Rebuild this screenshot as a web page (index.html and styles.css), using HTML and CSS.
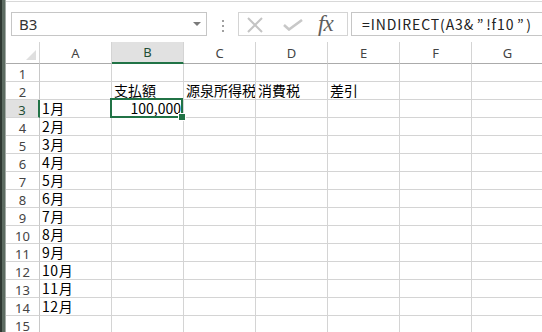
FILE: index.html
```html
<!DOCTYPE html>
<html lang="ja">
<head>
<meta charset="utf-8">
<link rel="stylesheet" href="styles.css">
</head>
<body>
<div class="app">
  <div class="edge"></div>
  <div class="main">
    <div class="topbar">
      <div class="namebox"><span class="name">B3</span><span class="arrow"></span></div>
      <div class="grip"><i></i><i></i><i></i></div>
      <div class="fnbtns">
        <svg class="ic-x" width="16" height="16" viewBox="0 0 16 16"><path d="M1 1L15 15M15 1L1 15" stroke="#c4c4c4" stroke-width="2" fill="none"/></svg>
        <svg class="ic-check" width="20" height="12" viewBox="0 0 20 12"><path d="M1 6L6 10.5L19 1" stroke="#c8c8c8" stroke-width="2.6" fill="none"/></svg>
        <span class="fx">fx</span>
      </div>
      <div class="formula">=INDIRECT(A3&amp;<span class="q">”</span>!f10<span class="q">”</span>)</div>
    </div>
    <div class="sheet">
      <div class="hd corner"><span class="tri"></span></div>
      <div class="hd col">A</div>
      <div class="hd col sel">B</div>
      <div class="hd col">C</div>
      <div class="hd col">D</div>
      <div class="hd col">E</div>
      <div class="hd col">F</div>
      <div class="hd col">G</div>

      <div class="hd row">1</div><div class="c"></div><div class="c"></div><div class="c"></div><div class="c"></div><div class="c"></div><div class="c"></div><div class="c"></div>
      <div class="hd row">2</div><div class="c"></div><div class="c">支払額</div><div class="c clip">源泉所得税</div><div class="c">消費税</div><div class="c">差引</div><div class="c"></div><div class="c"></div>
      <div class="hd row sel">3</div><div class="c m">1月</div><div class="c num active">100,000</div><div class="c"></div><div class="c"></div><div class="c"></div><div class="c"></div><div class="c"></div>
      <div class="hd row">4</div><div class="c m">2月</div><div class="c"></div><div class="c"></div><div class="c"></div><div class="c"></div><div class="c"></div><div class="c"></div>
      <div class="hd row">5</div><div class="c m">3月</div><div class="c"></div><div class="c"></div><div class="c"></div><div class="c"></div><div class="c"></div><div class="c"></div>
      <div class="hd row">6</div><div class="c m">4月</div><div class="c"></div><div class="c"></div><div class="c"></div><div class="c"></div><div class="c"></div><div class="c"></div>
      <div class="hd row">7</div><div class="c m">5月</div><div class="c"></div><div class="c"></div><div class="c"></div><div class="c"></div><div class="c"></div><div class="c"></div>
      <div class="hd row">8</div><div class="c m">6月</div><div class="c"></div><div class="c"></div><div class="c"></div><div class="c"></div><div class="c"></div><div class="c"></div>
      <div class="hd row">9</div><div class="c m">7月</div><div class="c"></div><div class="c"></div><div class="c"></div><div class="c"></div><div class="c"></div><div class="c"></div>
      <div class="hd row">10</div><div class="c m">8月</div><div class="c"></div><div class="c"></div><div class="c"></div><div class="c"></div><div class="c"></div><div class="c"></div>
      <div class="hd row">11</div><div class="c m">9月</div><div class="c"></div><div class="c"></div><div class="c"></div><div class="c"></div><div class="c"></div><div class="c"></div>
      <div class="hd row">12</div><div class="c m">10月</div><div class="c"></div><div class="c"></div><div class="c"></div><div class="c"></div><div class="c"></div><div class="c"></div>
      <div class="hd row">13</div><div class="c m">11月</div><div class="c"></div><div class="c"></div><div class="c"></div><div class="c"></div><div class="c"></div><div class="c"></div>
      <div class="hd row">14</div><div class="c m">12月</div><div class="c"></div><div class="c"></div><div class="c"></div><div class="c"></div><div class="c"></div><div class="c"></div>
      <div class="hd row">15</div><div class="c"></div><div class="c"></div><div class="c"></div><div class="c"></div><div class="c"></div><div class="c"></div><div class="c"></div>
    </div>
  </div>
</div>
</body>
</html>
```

FILE: styles.css
```css
* { box-sizing: border-box; }
html, body { margin: 0; padding: 0; background: #fff; }
body { width: 542px; height: 332px; overflow: hidden; }

.app {
  display: flex;
  width: 542px;
  height: 332px;
  overflow: hidden;
}

.edge {
  width: 6px;
  flex: none;
  background: linear-gradient(to right, #2e3832 0 2px, #5c6b61 2px 5px, #a3aca6 5px 6px);
}

.main {
  flex: 1;
  min-width: 0;
  overflow: hidden;
}

.topbar {
  height: 41px;
  margin-top: 1px;
  border-top: 1px solid #d8d8d8;
  padding-top: 10px;
  display: flex;
  align-items: flex-start;
  font-family: "Noto Sans", "Liberation Sans", sans-serif;
}

.namebox {
  width: 196px;
  height: 24px;
  margin-left: 5px;
  border: 1px solid #c6c6c6;
  display: flex;
  align-items: center;
  justify-content: space-between;
  padding: 0 5px 0 7px;
  flex: none;
}
.name { font-size: 15px; color: #333; line-height: 20px; }
.arrow {
  width: 0; height: 0;
  border-left: 4px solid transparent;
  border-right: 4px solid transparent;
  border-top: 4px solid #7a7a7a;
}

.grip {
  width: 2px;
  margin-left: 15px;
  margin-top: 8px;
  display: flex;
  flex-direction: column;
  gap: 3px;
  flex: none;
}
.grip i { display: block; width: 2px; height: 2px; background: #a0a0a0; }

.fnbtns {
  width: 110px;
  height: 24px;
  margin-left: 14px;
  border: 1px solid #d4d4d4;
  display: flex;
  align-items: center;
  flex: none;
}
.ic-x { margin-left: 8px; margin-top: 2px; }
.ic-check { margin-left: 20px; margin-top: 1px; }
.fx {
  margin-left: 15px;
  font-family: "Liberation Serif", "DejaVu Serif", serif;
  font-style: italic;
  font-size: 23px;
  color: #5e5e5e;
  line-height: 20px;
  letter-spacing: -1px;
}

.formula {
  flex: none;
  width: 260px;
  height: 24px;
  margin-left: 3px;
  border: 1px solid #c6c6c6;
  padding-left: 10px;
  font-family: "Noto Sans CJK JP", "Noto Sans", sans-serif;
  font-size: 14px;
  letter-spacing: 0.9px;
  line-height: 22px;
  color: #222;
  white-space: nowrap;
}
.q { display: inline-block; width: 12px; text-align: center; letter-spacing: 0; }

.sheet {
  display: grid;
  grid-template-columns: 34px repeat(7, 72px);
  grid-template-rows: 22px repeat(15, 18px);
  width: 538px;
}

.hd {
  border-right: 1px solid #d4d4d4;
  border-bottom: 1px solid #d4d4d4;
  font-family: "Noto Sans", "Liberation Sans", sans-serif;
  font-size: 13px;
  color: #444;
  display: flex;
  align-items: center;
  justify-content: center;
  background: #fff;
}
.hd.col { border-bottom-color: #ababab; line-height: 20px; }
.hd.corner {
  border-bottom-color: #ababab;
  border-right-color: #d4d4d4;
  align-items: flex-end;
  justify-content: flex-end;
  padding: 0 3px 3px 0;
}
.tri {
  width: 0; height: 0;
  border-left: 10px solid transparent;
  border-bottom: 10px solid #dfdfdf;
}
.hd.row { border-right-color: #c8c8c8; padding-top: 2px; line-height: 16px; }
.hd.col.sel {
  background: #e1e1e1;
  border-bottom: 2px solid #217346;
  color: #1f4e35;
}
.hd.row.sel {
  background: #e1e1e1;
  border-right: 2px solid #217346;
  color: #1f4e35;
}

.c {
  border-right: 1px solid #d4d4d4;
  border-bottom: 1px solid #d4d4d4;
  font-family: "Noto Sans CJK JP", "Noto Sans", sans-serif;
  font-size: 14px;
  line-height: 17px;
  color: #000;
  white-space: nowrap;
  padding-left: 2px;
  position: relative;
}
.c.m { letter-spacing: 0.6px; }
.c.clip { overflow: hidden; }
.c.num { text-align: right; padding-right: 2px; }
.c.active::after {
  content: "";
  position: absolute;
  left: -2px; top: -2px; right: 0; bottom: -1px;
  border: 2px solid #217346;
}
.c.active::before {
  content: "";
  position: absolute;
  right: -3px; bottom: -4px;
  width: 6px; height: 6px;
  background: #217346;
  border: 1px solid #fff;
  z-index: 1;
}
```
